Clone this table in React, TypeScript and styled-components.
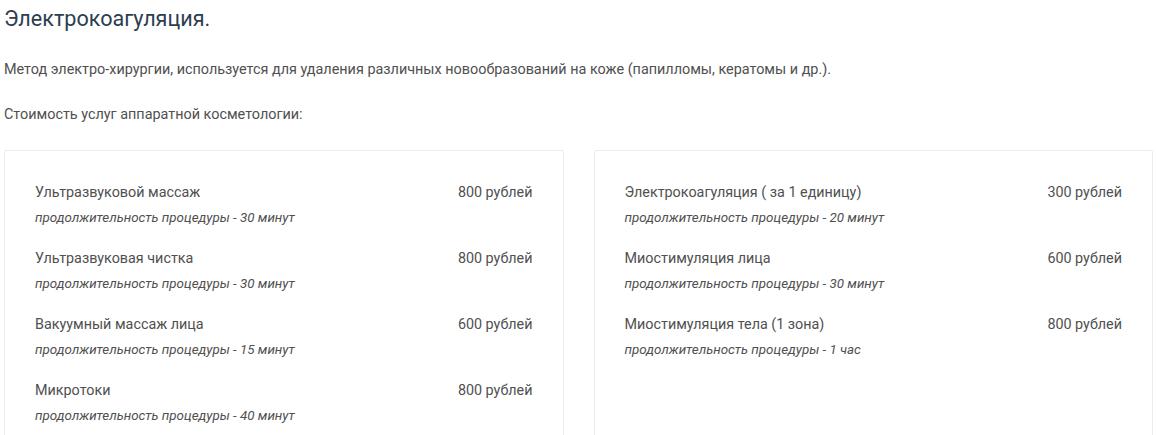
import styled, { createGlobalStyle } from 'styled-components'

const GlobalStyle = createGlobalStyle`
    body {
        margin: 0;
        background: #fff;
        font-family: Roboto, "Liberation Sans", sans-serif;
        color: #505050;
    }
`

const Page = styled.div`
    padding: 7px 3px 0 4px;
`

const Title = styled.h1`
    margin: 0;
    font-size: 21.6px;
    line-height: 24px;
    font-weight: 400;
    color: #2c3e50;
`

const Text = styled.p<{ $top: number }>`
    margin: ${p => p.$top}px 0 0;
    font-size: 14.4px;
    line-height: 20px;
    color: #505050;
`

const Columns = styled.div`
    margin-top: 25px;
    display: grid;
    grid-template-columns: 1fr 1fr;
    column-gap: 30px;
    align-items: start;
`

const Card = styled.div`
    border: 1px solid #ececec;
    border-radius: 2px;
    padding: 29px 30px 0 30px;
    min-height: 300px;
`

const Item = styled.div`
    padding-bottom: 16px;
`

const Row = styled.div`
    display: flex;
    justify-content: space-between;
    font-size: 14.35px;
    line-height: 25px;
    color: #505050;
`

const Duration = styled.div`
    font-size: 13.35px;
    line-height: 25px;
    font-style: italic;
    color: #505050;
`

const left = [
    { name: 'Ультразвуковой массаж', price: '800 рублей', time: '30 минут' },
    { name: 'Ультразвуковая чистка', price: '800 рублей', time: '30 минут' },
    { name: 'Вакуумный массаж лица', price: '600 рублей', time: '15 минут' },
    { name: 'Микротоки', price: '800 рублей', time: '40 минут' },
]

const right = [
    { name: 'Электрокоагуляция ( за 1 единицу)', price: '300 рублей', time: '20 минут' },
    { name: 'Миостимуляция лица', price: '600 рублей', time: '30 минут' },
    { name: 'Миостимуляция тела (1 зона)', price: '800 рублей', time: '1 час' },
]

const PriceCard = ({ items }) => (
    <Card>
        {items.map(item => (
            <Item key={item.name}>
                <Row>
                    <span>{item.name}</span>
                    <span>{item.price}</span>
                </Row>
                <Duration>продолжительность процедуры - {item.time}</Duration>
            </Item>
        ))}
    </Card>
)

const App = () => {
    return (
        <Page>
            <GlobalStyle />
            <Title>Электрокоагуляция.</Title>
            <Text $top={29}>
                Метод электро-хирургии, используется для удаления различных новообразований на коже (папилломы, кератомы и др.).
            </Text>
            <Text $top={25}>Стоимость услуг аппаратной косметологии:</Text>
            <Columns>
                <PriceCard items={left} />
                <PriceCard items={right} />
            </Columns>
        </Page>
    )
}

export default App
